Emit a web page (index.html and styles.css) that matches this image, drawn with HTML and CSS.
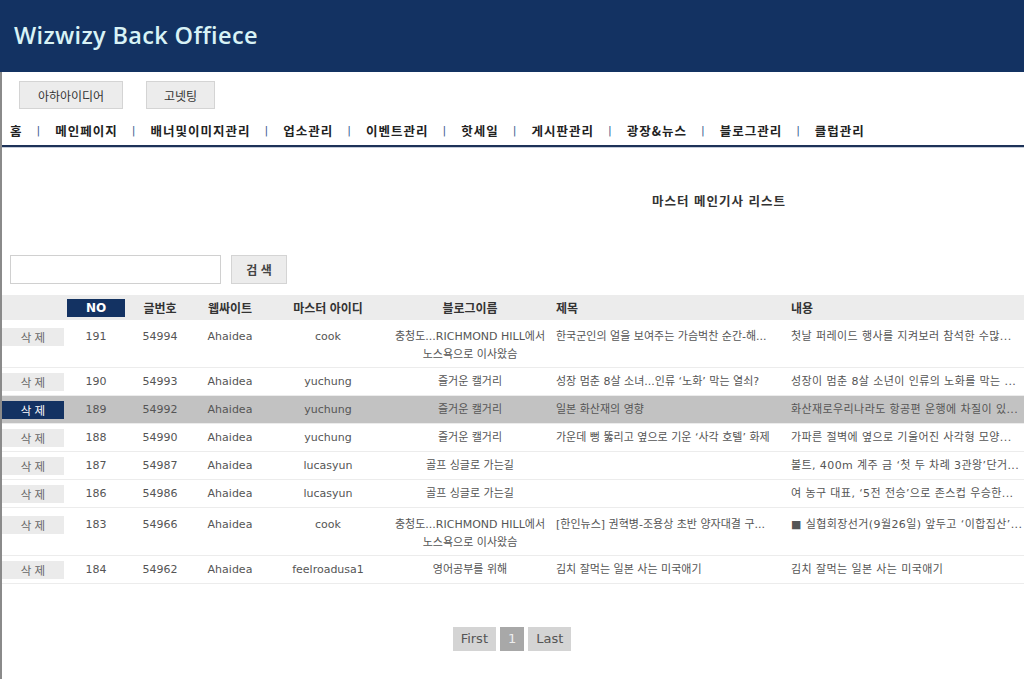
FILE: index.html
```html
<!DOCTYPE html>
<html lang="ko">
<head>
<meta charset="utf-8">
<title>Wizwizy Back Offiece</title>
<link rel="stylesheet" href="styles.css">
</head>
<body>
<header class="top">
  <h1 class="brand">Wizwizy Back Offiece</h1>
</header>
<div class="main">
  <div class="tabs">
    <button class="tab tab-wide" type="button">아하아이디어</button>
    <button class="tab tab-narrow" type="button">고넷팅</button>
  </div>
  <nav class="menu">
    <a class="menu-item">홈</a><span class="sep">|</span>
    <a class="menu-item">메인페이지</a><span class="sep">|</span>
    <a class="menu-item">배너및이미지관리</a><span class="sep">|</span>
    <a class="menu-item">업소관리</a><span class="sep">|</span>
    <a class="menu-item">이벤트관리</a><span class="sep">|</span>
    <a class="menu-item">핫세일</a><span class="sep">|</span>
    <a class="menu-item">게시판관리</a><span class="sep">|</span>
    <a class="menu-item">광장&amp;뉴스</a><span class="sep">|</span>
    <a class="menu-item">블로그관리</a><span class="sep">|</span>
    <a class="menu-item">클럽관리</a>
  </nav>
  <div class="menu-shadow"></div>
  <h2 class="page-title">마스터 메인기사 리스트</h2>
  <form class="search">
    <input class="search-input" type="text">
    <button class="search-btn" type="button">검 색</button>
  </form>
  <table class="list">
    <colgroup>
      <col class="c-del"><col class="c-no"><col class="c-num"><col class="c-site"><col class="c-id"><col class="c-blog"><col class="c-title"><col class="c-body">
    </colgroup>
    <thead>
      <tr>
        <th></th>
        <th><span class="no-box">NO</span></th>
        <th>글번호</th>
        <th>웹싸이트</th>
        <th>마스터 아이디</th>
        <th>블로그이름</th>
        <th class="left">제목</th>
        <th class="left">내용</th>
      </tr>
    </thead>
    <tbody>
      <tr class="tall">
        <td><span class="del">삭 제</span></td><td>191</td><td>54994</td><td>Ahaidea</td><td>cook</td>
        <td>충청도...RICHMOND HILL에서 노스욕으로 이사왔슴</td>
        <td class="left">한국군인의 얼을 보여주는 가슴벅찬 순간-해...</td>
        <td class="left wide">첫날 퍼레이드 행사를 지켜보러 참석한 수많...</td>
      </tr>
      <tr>
        <td><span class="del">삭 제</span></td><td>190</td><td>54993</td><td>Ahaidea</td><td>yuchung</td>
        <td>즐거운 캘거리</td>
        <td class="left">성장 멈춘 8살 소녀...인류 ‘노화’ 막는 열쇠?</td>
        <td class="left wide">성장이 멈춘 8살 소년이 인류의 노화를 막는 ...</td>
      </tr>
      <tr class="active">
        <td><span class="del">삭 제</span></td><td>189</td><td>54992</td><td>Ahaidea</td><td>yuchung</td>
        <td>즐거운 캘거리</td>
        <td class="left">일본 화산재의 영향</td>
        <td class="left wide">화산재로우리나라도 항공편 운행에 차질이 있...</td>
      </tr>
      <tr>
        <td><span class="del">삭 제</span></td><td>188</td><td>54990</td><td>Ahaidea</td><td>yuchung</td>
        <td>즐거운 캘거리</td>
        <td class="left">가운데 뻥 뚫리고 옆으로 기운 ‘사각 호텔’ 화제</td>
        <td class="left wide">가파른 절벽에 옆으로 기울어진 사각형 모양...</td>
      </tr>
      <tr>
        <td><span class="del">삭 제</span></td><td>187</td><td>54987</td><td>Ahaidea</td><td>lucasyun</td>
        <td>골프 싱글로 가는길</td>
        <td class="left"></td>
        <td class="left wide">볼트, 400m 계주 금 ‘첫 두 차례 3관왕’단거...</td>
      </tr>
      <tr>
        <td><span class="del">삭 제</span></td><td>186</td><td>54986</td><td>Ahaidea</td><td>lucasyun</td>
        <td>골프 싱글로 가는길</td>
        <td class="left"></td>
        <td class="left wide">여 농구 대표, ‘5전 전승’으로 존스컵 우승한...</td>
      </tr>
      <tr class="tall">
        <td><span class="del">삭 제</span></td><td>183</td><td>54966</td><td>Ahaidea</td><td>cook</td>
        <td>충청도...RICHMOND HILL에서 노스욕으로 이사왔슴</td>
        <td class="left">[한인뉴스] 권혁병-조용상 초반 양자대결 구...</td>
        <td class="left wide">■ 실협회장선거(9월26일) 앞두고 ‘이합집산’...</td>
      </tr>
      <tr>
        <td><span class="del">삭 제</span></td><td>184</td><td>54962</td><td>Ahaidea</td><td>feelroadusa1</td>
        <td>영어공부를 위해</td>
        <td class="left">김치 잘먹는 일본 사는 미국애기</td>
        <td class="left wide">김치 잘먹는 일본 사는 미국애기</td>
      </tr>
    </tbody>
  </table>
  <div class="pager">
    <a class="page">First</a>
    <a class="page current">1</a>
    <a class="page">Last</a>
  </div>
</div>
</body>
</html>
```
FILE: styles.css
```css
* { box-sizing: border-box; }
html, body { margin: 0; padding: 0; background: #fff; }
body {
  font-family: "DejaVu Sans", "Noto Sans CJK KR", sans-serif;
  font-size: 11px;
  color: #555;
}
.top {
  height: 72px;
  background: #133262;
  display: flex;
  align-items: center;
  padding-left: 14px;
}
.brand {
  margin: 0;
  font-family: "Open Sans", "DejaVu Sans", sans-serif;
  font-weight: 600;
  font-size: 23.5px;
  color: #d8f2f6;
  letter-spacing: 0.35px;
  padding-bottom: 2px;
}
.main {
  border-left: 2px solid #8a8a8a;
  min-height: calc(100vh - 72px);
}
.tabs {
  display: flex;
  gap: 23px;
  padding: 9px 0 0 17px;
}
.tab {
  height: 28px;
  margin: 0;
  background: #ececec;
  border: 1px solid #d4d4d4;
  font-family: "Noto Sans CJK KR", sans-serif;
  font-size: 12px;
  color: #333;
  padding: 0;
}
.tab-wide { width: 104px; }
.tab-narrow { width: 69px; }
.menu {
  display: flex;
  align-items: center;
  padding: 13px 0 5px 8px;
  line-height: 18px;
  border-bottom: 2px solid #1d3258;
  font-family: "Noto Sans CJK KR", sans-serif;
  font-weight: 700;
  font-size: 12.5px;
  letter-spacing: 1px;
  color: #222;
}
.menu-shadow { height: 1px; background: #c5ccd8; }
.menu-item { white-space: nowrap; }
.sep {
  padding: 0 15px 0 14px;
  font-family: "DejaVu Sans", sans-serif;
  font-weight: 400;
  font-size: 11px;
  letter-spacing: 0;
  color: #3c5e92;
}
.page-title {
  margin: 44px 0 0 650px;
  line-height: 18px;
  font-family: "Noto Sans CJK KR", sans-serif;
  font-weight: 700;
  font-size: 12.5px;
  letter-spacing: 1px;
  color: #333;
}
.search {
  display: flex;
  gap: 10px;
  margin: 45px 0 0 8px;
}
.search-input {
  width: 211px;
  height: 29px;
  margin: 0;
  border: 1px solid #d0d0d0;
  padding: 0 4px;
}
.search-btn {
  width: 56px;
  height: 29px;
  margin: 0;
  padding: 0;
  background: #ececec;
  border: 1px solid #d4d4d4;
  font-family: "Noto Sans CJK KR", sans-serif;
  font-weight: 700;
  font-size: 12px;
  color: #444;
}
.list {
  width: 1022px;
  margin-top: 11px;
  border-collapse: collapse;
  table-layout: fixed;
}
.c-del { width: 62px; }
.c-no { width: 64px; }
.c-num { width: 64px; }
.c-site { width: 76px; }
.c-id { width: 120px; }
.c-blog { width: 164px; }
.c-title { width: 235px; }
.c-body { width: 237px; }
.list thead tr { background: #ececec; }
.list th {
  height: 25px;
  padding: 0 3px;
  font-family: "Noto Sans CJK KR", sans-serif;
  font-weight: 700;
  font-size: 12px;
  color: #333;
  text-align: center;
  vertical-align: middle;
}
.list th.left, .list td.left { text-align: left; padding-left: 4px; }
.no-box {
  display: block;
  height: 18px;
  line-height: 18px;
  background: #133262;
  color: #fff;
  font-family: "DejaVu Sans", sans-serif;
  font-size: 12px;
}
.list td {
  padding: 5px 3px 4px;
  line-height: 18px;
  text-align: center;
  vertical-align: top;
  border-bottom: 1px solid #ececec;
  overflow: hidden;
}
.list tr.tall td { padding-top: 8px; padding-bottom: 4px; line-height: 17.5px; }
.list td.left { white-space: nowrap; }
.list td.wide { letter-spacing: 0.4px; }
.list td:first-child { padding-left: 0; padding-right: 0; }
.del {
  display: block;
  height: 18px;
  line-height: 18px;
  background: #ebebeb;
  color: #666;
  font-family: "Noto Sans CJK KR", sans-serif;
  font-size: 11.5px;
  text-align: center;
}
.list tr.active td { background: #c2c2c2; }
.list tr.active .del { background: #133262; color: #fff; }
.pager {
  display: flex;
  justify-content: center;
  gap: 4px;
  margin-top: 43px;
  padding-right: 2px;
}
.page {
  height: 24px;
  line-height: 24px;
  padding: 0 8px;
  background: #d4d4d4;
  color: #555;
  font-size: 13px;
}
.page.current { background: #a8a8a8; color: #eee; }
```
